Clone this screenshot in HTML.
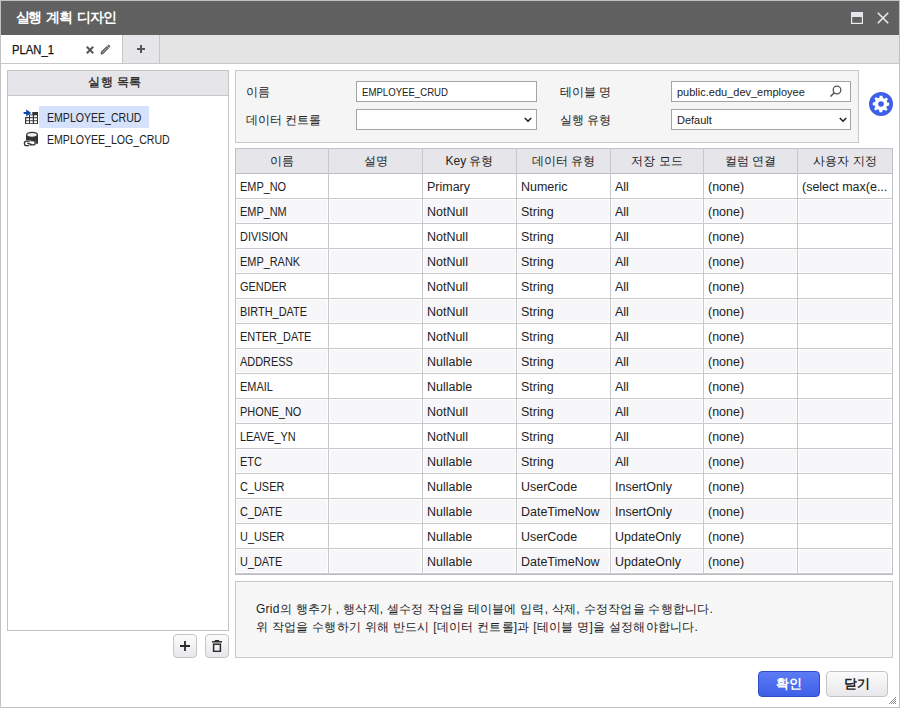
<!DOCTYPE html>
<html><head><meta charset="utf-8">
<style>
*{box-sizing:border-box;margin:0;padding:0}
html,body{width:900px;height:708px;overflow:hidden;background:#fff}
body{font-family:"Liberation Sans",sans-serif;font-size:12px;color:#222;position:relative}
.a{position:absolute}
.th{height:24px;line-height:24px;text-align:center;font-size:12px;color:#222;white-space:nowrap}
.td{height:24px;line-height:24px;font-size:12px;color:#222;white-space:nowrap}
.mx{transform:scaleX(1.04);transform-origin:0 0}
.up{font-size:12px;transform:scaleX(0.91);transform-origin:0 0}
.lbl{font-size:12px;letter-spacing:-0.1px;line-height:20px;color:#222;white-space:nowrap}
.inp{background:#fff;border:1px solid #a3a3a3;font-size:11px;line-height:19px;padding-left:5px;color:#222;white-space:nowrap}
.btn{border:1px solid #c4c4c4;border-radius:4px;background:linear-gradient(#fbfbfc,#e8e8ec);text-align:center}
</style></head><body>
<div class="a" style="left:0;top:0;width:900px;height:708px;border:1px solid #c2c2c2"></div>
<div class="a" style="left:1px;top:1px;width:898px;height:34px;background:#616161"></div>
<div class="a" style="left:15.5px;top:1px;height:34px;line-height:34px;color:#fff;font-weight:bold;font-size:13.5px;letter-spacing:-1.1px;word-spacing:2.5px;white-space:nowrap">실행 계획 디자인</div>
<svg class="a" style="left:851px;top:12px" width="12" height="12" viewBox="0 0 12 12"><rect x="0.6" y="0.6" width="10.8" height="10.8" fill="none" stroke="#ececec" stroke-width="1.2"/><rect x="0" y="0" width="12" height="5" fill="#e6e6ea"/></svg>
<svg class="a" style="left:877px;top:12px" width="12" height="12" viewBox="0 0 12 12"><path d="M0.8 0.8L11.2 11.2M11.2 0.8L0.8 11.2" stroke="#ececec" stroke-width="1.6"/></svg>

<div class="a" style="left:1px;top:35px;width:898px;height:28px;background:#e4e4e4"></div>
<div class="a" style="left:1px;top:63px;width:898px;height:1px;background:#c8c8c8"></div>
<div class="a" style="left:1px;top:35px;width:121px;height:28px;background:#fff"></div>
<div class="a" style="left:122px;top:35px;width:1px;height:28px;background:#c8c8c8"></div>
<div class="a" style="left:123px;top:35px;width:36px;height:28px;background:#e6e6ea"></div>
<div class="a" style="left:159px;top:35px;width:1px;height:28px;background:#c8c8c8"></div>
<div class="a" style="left:12px;top:42px;line-height:16px;font-size:12.5px;color:#111;-webkit-text-stroke:0.25px #111;white-space:nowrap;transform:scaleX(0.9);transform-origin:0 0">PLAN_1</div>
<svg class="a" style="left:86px;top:46px" width="8" height="8" viewBox="0 0 8 8"><path d="M0.8 0.8L7.2 7.2M7.2 0.8L0.8 7.2" stroke="#555" stroke-width="2"/></svg>
<svg class="a" style="left:100px;top:44px" width="11" height="11" viewBox="0 0 11 11"><path d="M1.2 9.8L1.6 8L6.8 2.8L8.2 4.2L3 9.4Z" fill="#bbb" stroke="#555" stroke-width="1.2" stroke-linejoin="round"/><path d="M7.8 1.8L8.6 1L10 2.4L9.2 3.2Z" fill="#555" stroke="#555" stroke-width="1"/></svg>
<svg class="a" style="left:137px;top:45px" width="8" height="8" viewBox="0 0 8 8"><path d="M4 0V8M0 4H8" stroke="#555" stroke-width="2"/></svg>

<!-- left panel -->
<div class="a" style="left:7px;top:70px;width:222px;height:561px;border:1px solid #c4c4c4;background:#fff"></div>
<div class="a" style="left:8px;top:71px;width:220px;height:24px;background:#e6e6ea"></div>
<div class="a" style="left:8px;top:95px;width:220px;height:1px;background:#c8c8c8"></div>
<div class="a" style="left:5px;top:70px;width:220px;height:24px;line-height:24px;text-align:center;font-size:12px;-webkit-text-stroke:0.3px #222;letter-spacing:0.2px;word-spacing:1px;color:#222">실행 목록</div>
<div class="a" style="left:39px;top:106px;width:110px;height:22px;background:#d6e1fb"></div>
<svg class="a" style="left:20px;top:106px" width="22" height="22" viewBox="0 0 22 22"><rect x="5" y="11" width="13" height="7" fill="#333"/><rect x="9" y="8.5" width="9" height="3" fill="#333"/><rect x="12.3" y="6" width="5.7" height="3" fill="#333"/><g fill="#fff"><rect x="6.2" y="12.2" width="2.8" height="2.1"/><rect x="10" y="12.2" width="2.8" height="2.1"/><rect x="14" y="12.2" width="3" height="2.1"/><rect x="6.2" y="15.2" width="2.8" height="2"/><rect x="10" y="15.2" width="2.8" height="2"/><rect x="14" y="15.2" width="3" height="2"/><rect x="10" y="9.3" width="2.8" height="1.9"/><rect x="14" y="9.3" width="3" height="1.9"/></g><path d="M3.6 5.9H6.2V3.6L11.3 7L6.2 10.4V8.1H3.6Z" fill="#0a47a3"/></svg>
<div class="a" style="font-size:12px;transform:scaleX(0.88);transform-origin:0 0;left:47px;top:110px;line-height:16px;color:#222;white-space:nowrap">EMPLOYEE_CRUD</div>
<svg class="a" style="left:20px;top:128px" width="22" height="22" viewBox="0 0 22 22"><path d="M6 6.8V15C6 17.2 18 17.2 18 15V6.8Z" fill="#333"/><ellipse cx="12" cy="6.8" rx="5.4" ry="2.5" fill="#efefef" stroke="#333" stroke-width="1.2"/><path d="M6.6 12.2H13A3.2 3.2 0 0 1 13 18.6H6.6A3.2 3.2 0 0 1 6.6 12.2Z" fill="#fff"/><path d="M10.2 13.2H6.6A2.2 2.2 0 0 0 6.6 17.6H9M7.2 15.3C9 15 10 16.4 12.3 16.6M9.6 16.9H13A2.2 2.2 0 0 0 13 12.5H10.6" fill="none" stroke="#333" stroke-width="1.3"/></svg>
<div class="a" style="font-size:12px;transform:scaleX(0.88);transform-origin:0 0;left:47px;top:132px;line-height:16px;color:#222;white-space:nowrap">EMPLOYEE_LOG_CRUD</div>

<div class="a btn" style="left:173px;top:634px;width:24px;height:24px"></div>
<svg class="a" style="left:180px;top:641px" width="10" height="10" viewBox="0 0 10 10"><path d="M5 0V10M0 5H10" stroke="#2a2a2a" stroke-width="1.8"/></svg>
<div class="a btn" style="left:205px;top:634px;width:24px;height:24px"></div>
<svg class="a" style="left:212px;top:640px" width="10" height="12" viewBox="0 0 10 12"><path d="M0 1.8H10" stroke="#2a2a2a" stroke-width="1.5"/><path d="M3.5 1V0.6H6.5V1" stroke="#2a2a2a" stroke-width="1.2" fill="none"/><rect x="1.6" y="4.2" width="6.8" height="7.2" fill="none" stroke="#2a2a2a" stroke-width="1.5"/></svg>

<!-- form -->
<div class="a" style="left:235px;top:70px;width:624px;height:73px;background:#f5f5f5;border:1px solid #c8c8c8"></div>
<div class="a lbl" style="left:246px;top:82px">이름</div>
<div class="a lbl" style="left:246px;top:110px">데이터 컨트롤</div>
<div class="a inp" style="left:356px;top:81px;width:181px;height:21px;font-size:10.5px"><span class="a" style="left:5px;top:1px;transform:scaleX(0.915);transform-origin:0 0">EMPLOYEE_CRUD</span></div>
<div class="a inp" style="left:356px;top:109px;width:181px;height:21px"></div>
<svg class="a" style="left:524px;top:117px" width="8" height="6" viewBox="0 0 8 6"><path d="M0.8 1L4 4.2L7.2 1" stroke="#222" stroke-width="1.6" fill="none"/></svg>
<div class="a lbl" style="left:560px;top:82px">테이블 명</div>
<div class="a lbl" style="left:560px;top:110px">실행 유형</div>
<div class="a inp" style="left:671px;top:81px;width:180px;height:21px;font-size:11px;padding-top:1px">public.edu_dev_employee</div>
<svg class="a" style="left:829px;top:85px" width="13" height="13" viewBox="0 0 13 13"><circle cx="8" cy="5" r="3.8" fill="none" stroke="#555" stroke-width="1.3"/><path d="M5.2 7.8L1.5 11.5" stroke="#555" stroke-width="1.6"/></svg>
<div class="a inp" style="left:671px;top:109px;width:180px;height:21px;font-size:11px;padding-top:1px">Default</div>
<svg class="a" style="left:839px;top:117px" width="8" height="6" viewBox="0 0 8 6"><path d="M0.8 1L4 4.2L7.2 1" stroke="#222" stroke-width="1.6" fill="none"/></svg>
<svg class="a" style="left:869px;top:92px" width="24" height="24" viewBox="0 0 24 24"><circle cx="12" cy="12" r="12" fill="#3f5fe8"/><g transform="translate(12 12)" fill="#fff"><path d="M-1.5 -8.2H1.5L1.9 -6L3.5 -5.3L5.3 -6.6L7 -4.9L5.7 -3.1L6.3 -1.5L8.2 -1.2V1.5L6 1.9L5.3 3.5L6.6 5.3L4.9 7L3.1 5.7L1.5 6.3L1.2 8.2H-1.5L-1.9 6L-3.5 5.3L-5.3 6.6L-7 4.9L-5.7 3.1L-6.3 1.5L-8.2 1.2V-1.5L-6 -1.9L-5.3 -3.5L-6.6 -5.3L-4.9 -7L-3.1 -5.7L-1.5 -6.3Z"/></g><circle cx="12" cy="12" r="2.8" fill="#3f5fe8"/></svg>

<!-- grid -->
<div class="a" style="left:237px;top:200px;width:90px;height:22px;background:#f7f7f9"></div>
<div class="a" style="left:330px;top:200px;width:91px;height:22px;background:#f7f7f9"></div>
<div class="a" style="left:424px;top:200px;width:91px;height:22px;background:#f7f7f9"></div>
<div class="a" style="left:518px;top:200px;width:91px;height:22px;background:#f7f7f9"></div>
<div class="a" style="left:612px;top:200px;width:90px;height:22px;background:#f7f7f9"></div>
<div class="a" style="left:705px;top:200px;width:91px;height:22px;background:#f7f7f9"></div>
<div class="a" style="left:799px;top:200px;width:92px;height:22px;background:#f7f7f9"></div>
<div class="a" style="left:237px;top:250px;width:90px;height:22px;background:#f7f7f9"></div>
<div class="a" style="left:330px;top:250px;width:91px;height:22px;background:#f7f7f9"></div>
<div class="a" style="left:424px;top:250px;width:91px;height:22px;background:#f7f7f9"></div>
<div class="a" style="left:518px;top:250px;width:91px;height:22px;background:#f7f7f9"></div>
<div class="a" style="left:612px;top:250px;width:90px;height:22px;background:#f7f7f9"></div>
<div class="a" style="left:705px;top:250px;width:91px;height:22px;background:#f7f7f9"></div>
<div class="a" style="left:799px;top:250px;width:92px;height:22px;background:#f7f7f9"></div>
<div class="a" style="left:237px;top:300px;width:90px;height:22px;background:#f7f7f9"></div>
<div class="a" style="left:330px;top:300px;width:91px;height:22px;background:#f7f7f9"></div>
<div class="a" style="left:424px;top:300px;width:91px;height:22px;background:#f7f7f9"></div>
<div class="a" style="left:518px;top:300px;width:91px;height:22px;background:#f7f7f9"></div>
<div class="a" style="left:612px;top:300px;width:90px;height:22px;background:#f7f7f9"></div>
<div class="a" style="left:705px;top:300px;width:91px;height:22px;background:#f7f7f9"></div>
<div class="a" style="left:799px;top:300px;width:92px;height:22px;background:#f7f7f9"></div>
<div class="a" style="left:237px;top:350px;width:90px;height:22px;background:#f7f7f9"></div>
<div class="a" style="left:330px;top:350px;width:91px;height:22px;background:#f7f7f9"></div>
<div class="a" style="left:424px;top:350px;width:91px;height:22px;background:#f7f7f9"></div>
<div class="a" style="left:518px;top:350px;width:91px;height:22px;background:#f7f7f9"></div>
<div class="a" style="left:612px;top:350px;width:90px;height:22px;background:#f7f7f9"></div>
<div class="a" style="left:705px;top:350px;width:91px;height:22px;background:#f7f7f9"></div>
<div class="a" style="left:799px;top:350px;width:92px;height:22px;background:#f7f7f9"></div>
<div class="a" style="left:237px;top:400px;width:90px;height:22px;background:#f7f7f9"></div>
<div class="a" style="left:330px;top:400px;width:91px;height:22px;background:#f7f7f9"></div>
<div class="a" style="left:424px;top:400px;width:91px;height:22px;background:#f7f7f9"></div>
<div class="a" style="left:518px;top:400px;width:91px;height:22px;background:#f7f7f9"></div>
<div class="a" style="left:612px;top:400px;width:90px;height:22px;background:#f7f7f9"></div>
<div class="a" style="left:705px;top:400px;width:91px;height:22px;background:#f7f7f9"></div>
<div class="a" style="left:799px;top:400px;width:92px;height:22px;background:#f7f7f9"></div>
<div class="a" style="left:237px;top:450px;width:90px;height:22px;background:#f7f7f9"></div>
<div class="a" style="left:330px;top:450px;width:91px;height:22px;background:#f7f7f9"></div>
<div class="a" style="left:424px;top:450px;width:91px;height:22px;background:#f7f7f9"></div>
<div class="a" style="left:518px;top:450px;width:91px;height:22px;background:#f7f7f9"></div>
<div class="a" style="left:612px;top:450px;width:90px;height:22px;background:#f7f7f9"></div>
<div class="a" style="left:705px;top:450px;width:91px;height:22px;background:#f7f7f9"></div>
<div class="a" style="left:799px;top:450px;width:92px;height:22px;background:#f7f7f9"></div>
<div class="a" style="left:237px;top:500px;width:90px;height:22px;background:#f7f7f9"></div>
<div class="a" style="left:330px;top:500px;width:91px;height:22px;background:#f7f7f9"></div>
<div class="a" style="left:424px;top:500px;width:91px;height:22px;background:#f7f7f9"></div>
<div class="a" style="left:518px;top:500px;width:91px;height:22px;background:#f7f7f9"></div>
<div class="a" style="left:612px;top:500px;width:90px;height:22px;background:#f7f7f9"></div>
<div class="a" style="left:705px;top:500px;width:91px;height:22px;background:#f7f7f9"></div>
<div class="a" style="left:799px;top:500px;width:92px;height:22px;background:#f7f7f9"></div>
<div class="a" style="left:237px;top:550px;width:90px;height:22px;background:#f7f7f9"></div>
<div class="a" style="left:330px;top:550px;width:91px;height:22px;background:#f7f7f9"></div>
<div class="a" style="left:424px;top:550px;width:91px;height:22px;background:#f7f7f9"></div>
<div class="a" style="left:518px;top:550px;width:91px;height:22px;background:#f7f7f9"></div>
<div class="a" style="left:612px;top:550px;width:90px;height:22px;background:#f7f7f9"></div>
<div class="a" style="left:705px;top:550px;width:91px;height:22px;background:#f7f7f9"></div>
<div class="a" style="left:799px;top:550px;width:92px;height:22px;background:#f7f7f9"></div>
<div class="a" style="left:236px;top:149px;width:656px;height:24px;background:#e6e6ea"></div>
<div class="a" style="left:235px;top:148px;width:658px;height:1px;background:#c2c2c6"></div>
<div class="a" style="left:235px;top:173px;width:658px;height:1px;background:#bfbfc3"></div>
<div class="a" style="left:235px;top:198px;width:658px;height:1px;background:#c9c9cb"></div>
<div class="a" style="left:235px;top:223px;width:658px;height:1px;background:#c9c9cb"></div>
<div class="a" style="left:235px;top:248px;width:658px;height:1px;background:#c9c9cb"></div>
<div class="a" style="left:235px;top:273px;width:658px;height:1px;background:#c9c9cb"></div>
<div class="a" style="left:235px;top:298px;width:658px;height:1px;background:#c9c9cb"></div>
<div class="a" style="left:235px;top:323px;width:658px;height:1px;background:#c9c9cb"></div>
<div class="a" style="left:235px;top:348px;width:658px;height:1px;background:#c9c9cb"></div>
<div class="a" style="left:235px;top:373px;width:658px;height:1px;background:#c9c9cb"></div>
<div class="a" style="left:235px;top:398px;width:658px;height:1px;background:#c9c9cb"></div>
<div class="a" style="left:235px;top:423px;width:658px;height:1px;background:#c9c9cb"></div>
<div class="a" style="left:235px;top:448px;width:658px;height:1px;background:#c9c9cb"></div>
<div class="a" style="left:235px;top:473px;width:658px;height:1px;background:#c9c9cb"></div>
<div class="a" style="left:235px;top:498px;width:658px;height:1px;background:#c9c9cb"></div>
<div class="a" style="left:235px;top:523px;width:658px;height:1px;background:#c9c9cb"></div>
<div class="a" style="left:235px;top:548px;width:658px;height:1px;background:#c9c9cb"></div>
<div class="a" style="left:235px;top:573px;width:658px;height:1px;background:#c9c9cb"></div>
<div class="a" style="left:235px;top:574px;width:658px;height:1px;background:#bdbdc1"></div>
<div class="a" style="left:235px;top:148px;width:1px;height:427px;background:#c2c2c6"></div>
<div class="a" style="left:328px;top:148px;width:1px;height:427px;background:#c8c8ca"></div>
<div class="a" style="left:422px;top:148px;width:1px;height:427px;background:#c8c8ca"></div>
<div class="a" style="left:516px;top:148px;width:1px;height:427px;background:#c8c8ca"></div>
<div class="a" style="left:610px;top:148px;width:1px;height:427px;background:#c8c8ca"></div>
<div class="a" style="left:703px;top:148px;width:1px;height:427px;background:#c8c8ca"></div>
<div class="a" style="left:797px;top:148px;width:1px;height:427px;background:#c8c8ca"></div>
<div class="a" style="left:892px;top:148px;width:1px;height:427px;background:#c2c2c6"></div>
<div class="a th" style="left:236px;top:149px;width:92px">이름</div>
<div class="a th" style="left:329px;top:149px;width:93px">설명</div>
<div class="a th" style="left:423px;top:149px;width:93px">Key 유형</div>
<div class="a th" style="left:517px;top:149px;width:93px">데이터 유형</div>
<div class="a th" style="left:611px;top:149px;width:92px">저장 모드</div>
<div class="a th" style="left:704px;top:149px;width:93px">컬럼 연결</div>
<div class="a th" style="left:798px;top:149px;width:94px">사용자 지정</div>
<div class="a td up" style="left:240px;top:175px">EMP_NO</div>
<div class="a td mx" style="left:427px;top:175px">Primary</div>
<div class="a td mx" style="left:521px;top:175px">Numeric</div>
<div class="a td mx" style="left:615px;top:175px">All</div>
<div class="a td mx" style="left:708px;top:175px">(none)</div>
<div class="a td mx" style="left:802px;top:175px">(select max(e...</div>
<div class="a td up" style="left:240px;top:200px">EMP_NM</div>
<div class="a td mx" style="left:427px;top:200px">NotNull</div>
<div class="a td mx" style="left:521px;top:200px">String</div>
<div class="a td mx" style="left:615px;top:200px">All</div>
<div class="a td mx" style="left:708px;top:200px">(none)</div>
<div class="a td up" style="left:240px;top:225px">DIVISION</div>
<div class="a td mx" style="left:427px;top:225px">NotNull</div>
<div class="a td mx" style="left:521px;top:225px">String</div>
<div class="a td mx" style="left:615px;top:225px">All</div>
<div class="a td mx" style="left:708px;top:225px">(none)</div>
<div class="a td up" style="left:240px;top:250px">EMP_RANK</div>
<div class="a td mx" style="left:427px;top:250px">NotNull</div>
<div class="a td mx" style="left:521px;top:250px">String</div>
<div class="a td mx" style="left:615px;top:250px">All</div>
<div class="a td mx" style="left:708px;top:250px">(none)</div>
<div class="a td up" style="left:240px;top:275px">GENDER</div>
<div class="a td mx" style="left:427px;top:275px">NotNull</div>
<div class="a td mx" style="left:521px;top:275px">String</div>
<div class="a td mx" style="left:615px;top:275px">All</div>
<div class="a td mx" style="left:708px;top:275px">(none)</div>
<div class="a td up" style="left:240px;top:300px">BIRTH_DATE</div>
<div class="a td mx" style="left:427px;top:300px">NotNull</div>
<div class="a td mx" style="left:521px;top:300px">String</div>
<div class="a td mx" style="left:615px;top:300px">All</div>
<div class="a td mx" style="left:708px;top:300px">(none)</div>
<div class="a td up" style="left:240px;top:325px">ENTER_DATE</div>
<div class="a td mx" style="left:427px;top:325px">NotNull</div>
<div class="a td mx" style="left:521px;top:325px">String</div>
<div class="a td mx" style="left:615px;top:325px">All</div>
<div class="a td mx" style="left:708px;top:325px">(none)</div>
<div class="a td up" style="left:240px;top:350px">ADDRESS</div>
<div class="a td mx" style="left:427px;top:350px">Nullable</div>
<div class="a td mx" style="left:521px;top:350px">String</div>
<div class="a td mx" style="left:615px;top:350px">All</div>
<div class="a td mx" style="left:708px;top:350px">(none)</div>
<div class="a td up" style="left:240px;top:375px">EMAIL</div>
<div class="a td mx" style="left:427px;top:375px">Nullable</div>
<div class="a td mx" style="left:521px;top:375px">String</div>
<div class="a td mx" style="left:615px;top:375px">All</div>
<div class="a td mx" style="left:708px;top:375px">(none)</div>
<div class="a td up" style="left:240px;top:400px">PHONE_NO</div>
<div class="a td mx" style="left:427px;top:400px">NotNull</div>
<div class="a td mx" style="left:521px;top:400px">String</div>
<div class="a td mx" style="left:615px;top:400px">All</div>
<div class="a td mx" style="left:708px;top:400px">(none)</div>
<div class="a td up" style="left:240px;top:425px">LEAVE_YN</div>
<div class="a td mx" style="left:427px;top:425px">NotNull</div>
<div class="a td mx" style="left:521px;top:425px">String</div>
<div class="a td mx" style="left:615px;top:425px">All</div>
<div class="a td mx" style="left:708px;top:425px">(none)</div>
<div class="a td up" style="left:240px;top:450px">ETC</div>
<div class="a td mx" style="left:427px;top:450px">Nullable</div>
<div class="a td mx" style="left:521px;top:450px">String</div>
<div class="a td mx" style="left:615px;top:450px">All</div>
<div class="a td mx" style="left:708px;top:450px">(none)</div>
<div class="a td up" style="left:240px;top:475px">C_USER</div>
<div class="a td mx" style="left:427px;top:475px">Nullable</div>
<div class="a td mx" style="left:521px;top:475px">UserCode</div>
<div class="a td mx" style="left:615px;top:475px">InsertOnly</div>
<div class="a td mx" style="left:708px;top:475px">(none)</div>
<div class="a td up" style="left:240px;top:500px">C_DATE</div>
<div class="a td mx" style="left:427px;top:500px">Nullable</div>
<div class="a td mx" style="left:521px;top:500px">DateTimeNow</div>
<div class="a td mx" style="left:615px;top:500px">InsertOnly</div>
<div class="a td mx" style="left:708px;top:500px">(none)</div>
<div class="a td up" style="left:240px;top:525px">U_USER</div>
<div class="a td mx" style="left:427px;top:525px">Nullable</div>
<div class="a td mx" style="left:521px;top:525px">UserCode</div>
<div class="a td mx" style="left:615px;top:525px">UpdateOnly</div>
<div class="a td mx" style="left:708px;top:525px">(none)</div>
<div class="a td up" style="left:240px;top:550px">U_DATE</div>
<div class="a td mx" style="left:427px;top:550px">Nullable</div>
<div class="a td mx" style="left:521px;top:550px">DateTimeNow</div>
<div class="a td mx" style="left:615px;top:550px">UpdateOnly</div>
<div class="a td mx" style="left:708px;top:550px">(none)</div>

<!-- description -->
<div class="a" style="left:235px;top:581px;width:658px;height:77px;background:#f7f7f8;border:1px solid #c8c8c8"></div>
<div class="a" style="left:256px;top:600px;font-size:12px;letter-spacing:0.25px;line-height:18px;color:#222;white-space:nowrap">Grid의 행추가 , 행삭제, 셀수정 작업을 테이블에 입력, 삭제, 수정작업을 수행합니다.<br>위 작업을 수행하기 위해 반드시 [데이터 컨트롤]과 [테이블 명]을 설정해야합니다.</div>

<div class="a btn" style="left:758px;top:671px;width:62px;height:26px;background:linear-gradient(#5c7bf4,#3f5fe8);border-color:#2f4cc9"></div>
<div class="a" style="left:758px;top:671px;width:62px;height:26px;line-height:26px;text-align:center;color:#fff;font-weight:bold;font-size:13px">확인</div>
<div class="a btn" style="left:826px;top:671px;width:62px;height:26px"></div>
<div class="a" style="left:826px;top:671px;width:62px;height:26px;line-height:26px;text-align:center;color:#222;font-weight:bold;font-size:13px">닫기</div>
<svg class="a" style="left:888px;top:696px" width="9" height="9" viewBox="0 0 9 9"><path d="M1 8L8 1M3 8L8 3M5 8L8 5M7 8L8 7" stroke="#888" stroke-width="0.9"/></svg>
</body></html>
